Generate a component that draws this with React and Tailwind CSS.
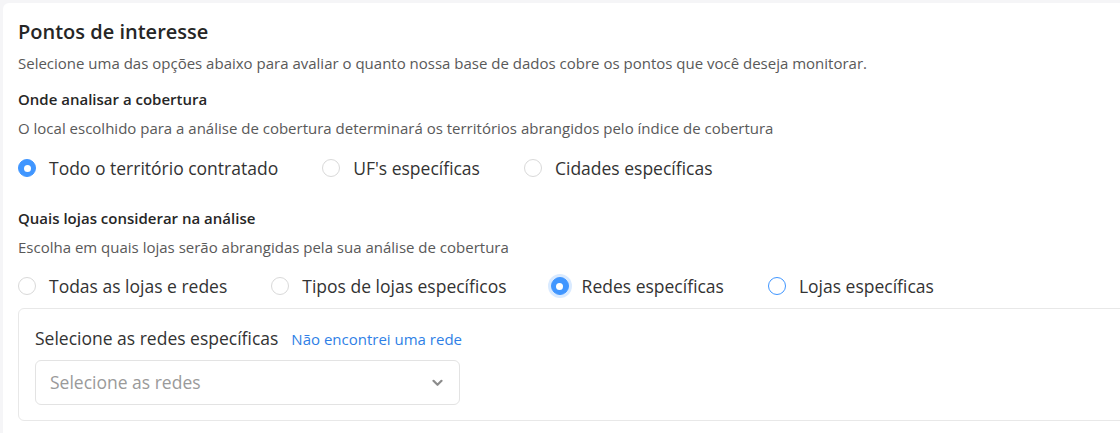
import { useState } from "react";

const font = { fontFamily: '"Open Sans", "Noto Sans", sans-serif' };

function Radio({ label, checked, focused, hover, onClick }) {
  return (
    <label onClick={onClick} className="flex items-center gap-[13px] cursor-pointer">
      <span
        className={
          "relative grid place-items-center w-[18px] h-[18px] rounded-full border " +
          (checked
            ? "bg-[#4096ff] border-[#4096ff]"
            : hover
            ? "bg-white border-[#4096ff]"
            : "bg-white border-[#d9d9d9]") +
          (focused ? " ring-[3px] ring-[#4096ff]/20" : "")
        }
      >
        {checked && <span className="w-[7px] h-[7px] rounded-full bg-white" />}
      </span>
      <span className="text-[17.5px] leading-[28px] text-[#333]">{label}</span>
    </label>
  );
}

export default function App() {
  const [area, setArea] = useState(0);
  const [lojas, setLojas] = useState(2);

  const areas = ["Todo o território contratado", "UF's específicas", "Cidades específicas"];
  const tipos = ["Todas as lojas e redes", "Tipos de lojas específicos", "Redes específicas", "Lojas específicas"];

  return (
    <div className="w-[1120px] h-[433px] overflow-hidden bg-[#f5f5f7]" style={font}>
      <div className="ml-[3px] mt-[3px] w-[1160px] h-[460px] bg-white rounded-md pl-[15px] pt-[15px]">
        <h1 className="text-[20px] leading-[28px] font-semibold text-[#262626]">Pontos de interesse</h1>
        <p className="mt-[7px] text-[15px] leading-[20px] text-[#595959]">
          Selecione uma das opções abaixo para avaliar o quanto nossa base de dados cobre os pontos que você deseja monitorar.
        </p>

        <h2 className="mt-[16px] text-[15px] leading-[20px] font-semibold text-[#262626]">Onde analisar a cobertura</h2>
        <p className="mt-[9px] text-[15px] leading-[20px] text-[#595959]">
          O local escolhido para a análise de cobertura determinará os territórios abrangidos pelo índice de cobertura
        </p>
        <div className="mt-[16px] flex items-center gap-x-[44px]">
          {areas.map((a, i) => (
            <Radio key={a} label={a} checked={area === i} onClick={() => setArea(i)} />
          ))}
        </div>

        <h2 className="mt-[26px] text-[15px] leading-[20px] font-semibold text-[#262626]">Quais lojas considerar na análise</h2>
        <p className="mt-[9px] text-[15px] leading-[20px] text-[#595959]">
          Escolha em quais lojas serão abrangidas pela sua análise de cobertura
        </p>
        <div className="mt-[15px] flex items-center gap-x-[44px]">
          {tipos.map((t, i) => (
            <Radio
              key={t}
              label={t}
              checked={lojas === i}
              focused={i === 2}
              hover={i === 3}
              onClick={() => setLojas(i)}
            />
          ))}
        </div>

        <div className="mt-[8px] w-full border border-[#e8e8e8] rounded-md pl-[16px] pt-[17px] pb-[15px]">
          <div className="flex items-baseline gap-[13px]">
            <span className="text-[17.5px] leading-[24px] text-[#333]">Selecione as redes específicas</span>
            <a href="#" className="text-[15px] leading-[20px] text-[#2f7fe6]">Não encontrei uma rede</a>
          </div>
          <button className="mt-[10px] w-[425px] h-[45px] flex items-center justify-between border border-[#e3e3e3] rounded-md pl-[14px] pr-[16px] bg-white">
            <span className="text-[17.5px] text-[#9a9a9a]">Selecione as redes</span>
            <svg width="11" height="8" viewBox="0 0 11 8" fill="none">
              <path d="M1.5 1.8 L5.5 5.8 L9.5 1.8" stroke="#8c8c8c" strokeWidth="2.2" strokeLinecap="round" strokeLinejoin="round" />
            </svg>
          </button>
        </div>
      </div>
    </div>
  );
}
